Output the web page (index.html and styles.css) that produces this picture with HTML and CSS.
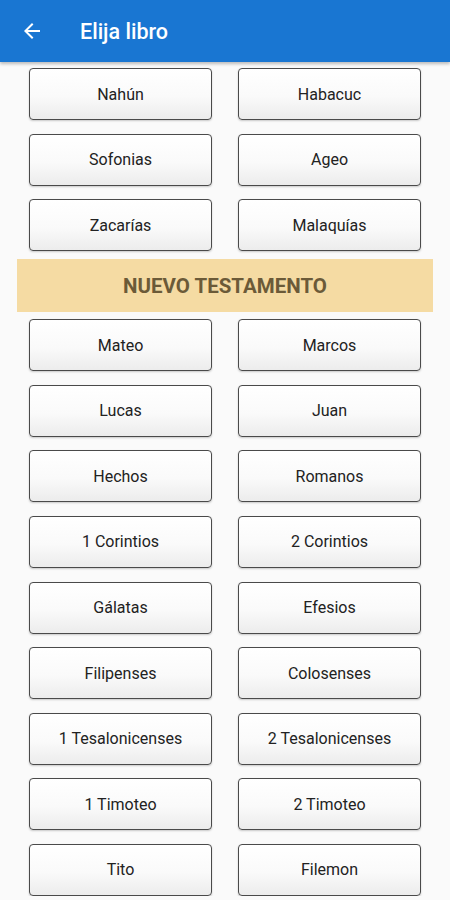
FILE: index.html
```html
<!DOCTYPE html>
<html lang="es">
<head>
    <meta charset="UTF-8">
    <meta name="viewport" content="width=device-width, initial-scale=1.0">
    <title>Elija libro</title>
    <link rel="stylesheet" href="styles.css">
</head>
<body>

    <!-- App bar -->
    <header class="app-bar">
        <svg class="back-icon" width="24" height="24" viewBox="0 0 24 24">
            <path d="M20 11H7.83l5.59-5.59L12 4l-8 8 8 8 1.41-1.41L7.83 13H20v-2z" fill="#fff"/>
        </svg>
        <h1 class="app-title">Elija libro</h1>
    </header>

    <main class="content">
        <div class="book-grid">
            <button class="book">Nahún</button>
            <button class="book">Habacuc</button>
            <button class="book">Sofonias</button>
            <button class="book">Ageo</button>
            <button class="book">Zacarías</button>
            <button class="book">Malaquías</button>
        </div>

        <div class="testament">NUEVO TESTAMENTO</div>

        <div class="book-grid">
            <button class="book">Mateo</button>
            <button class="book">Marcos</button>
            <button class="book">Lucas</button>
            <button class="book">Juan</button>
            <button class="book">Hechos</button>
            <button class="book">Romanos</button>
            <button class="book">1 Corintios</button>
            <button class="book">2 Corintios</button>
            <button class="book">Gálatas</button>
            <button class="book">Efesios</button>
            <button class="book">Filipenses</button>
            <button class="book">Colosenses</button>
            <button class="book">1 Tesalonicenses</button>
            <button class="book">2 Tesalonicenses</button>
            <button class="book">1 Timoteo</button>
            <button class="book">2 Timoteo</button>
            <button class="book">Tito</button>
            <button class="book">Filemon</button>
        </div>
    </main>

</body>
</html>
```
FILE: styles.css
```css
body {
    margin: 0;
    background-color: #fafafa;
    font-family: Roboto, "Liberation Sans", sans-serif;
    color: #222;
    overflow: hidden;
}

.app-bar {
    height: 62px;
    background-color: #1976d2; /* Material blue */
    display: flex;
    align-items: center;
    padding-left: 20px;
    box-shadow: 0 2px 3px rgba(0, 0, 0, 0.25);
    position: relative;
    z-index: 1;
}

.back-icon {
    flex: none;
}

.app-title {
    margin: 0 0 0 36px;
    color: #ffffff;
    font-size: 21.5px;
    font-weight: 500;
}

.content {
    padding: 6px 29px 0;
}

.book-grid {
    display: grid;
    grid-template-columns: 183px 183px;
    column-gap: 26px;
    row-gap: 13.6px;
}

.book {
    height: 52px;
    background: linear-gradient(#ffffff 0%, #fafafa 55%, #ececec 100%);
    border: 1px solid #4a4a4a;
    border-radius: 4px;
    box-shadow: 0 1px 2px rgba(0, 0, 0, 0.2);
    font-family: Roboto, "Liberation Sans", sans-serif;
    font-size: 16px;
    color: #222;
    padding: 0;
    cursor: pointer;
}

.testament {
    margin: 8px -12px 7px;
    height: 53px;
    background-color: #f5dba3; /* Sand */
    color: #6b5a38;
    font-size: 20.5px;
    font-weight: 700;
    display: flex;
    align-items: center;
    justify-content: center;
}
```
